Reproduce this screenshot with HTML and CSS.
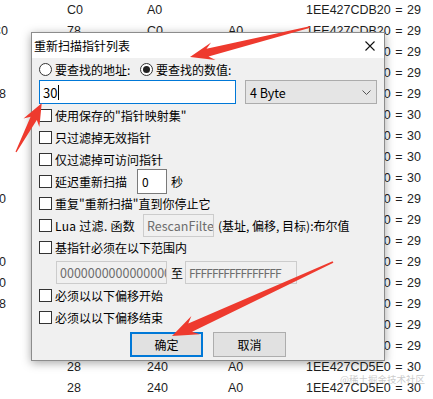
FILE: index.html
```html
<!DOCTYPE html>
<html lang="zh-CN">
<head>
  <meta charset="UTF-8" />
  <title>重新扫描指针列表</title>
  <link rel="stylesheet" href="styles.css">
</head>
<body>

  <!-- Pointer list behind the dialog -->
  <div class="table">
    <div class="row"><span></span><span>C0</span><span>A0</span><span></span><span>1EE427CDB20 = 29</span></div>
    <div class="row"><span>C0</span><span>78</span><span>C0</span><span>A0</span><span>1EE427CDB20 = 29</span></div>
    <div class="row"><span></span><span>C0</span><span>A0</span><span></span><span>1EE427CDB20 = 29</span></div>
    <div class="row"><span></span><span>C0</span><span>A0</span><span></span><span>1EE427CDB20 = 29</span></div>
    <div class="row"><span>18</span><span>78</span><span>C0</span><span>A0</span><span>1EE427CDB20 = 29</span></div>
    <div class="row"><span></span><span>28</span><span>240</span><span>A0</span><span>1EE427CD5E0 = 30</span></div>
    <div class="row"><span></span><span>28</span><span>240</span><span>A0</span><span>1EE427CD5E0 = 30</span></div>
    <div class="row"><span></span><span>28</span><span>240</span><span>A0</span><span>1EE427CD5E0 = 30</span></div>
    <div class="row"><span></span><span>28</span><span>240</span><span>A0</span><span>1EE427CD5E0 = 30</span></div>
    <div class="row"><span>10</span><span>C0</span><span>A0</span><span></span><span>1EE427CDB20 = 29</span></div>
    <div class="row"><span></span><span>C0</span><span>A0</span><span></span><span>1EE427CDB20 = 29</span></div>
    <div class="row"><span></span><span>C0</span><span>A0</span><span></span><span>1EE427CDB20 = 29</span></div>
    <div class="row"><span>10</span><span>78</span><span>C0</span><span>A0</span><span>1EE427CDB20 = 29</span></div>
    <div class="row"><span>10</span><span>78</span><span>C0</span><span>A0</span><span>1EE427CDB20 = 29</span></div>
    <div class="row"><span>18</span><span>78</span><span>C0</span><span>A0</span><span>1EE427CDB20 = 29</span></div>
    <div class="row"><span></span><span>C0</span><span>A0</span><span></span><span>1EE427CDB20 = 29</span></div>
    <div class="row"><span></span><span>C0</span><span>A0</span><span></span><span>1EE427CDB20 = 29</span></div>
    <div class="row"><span></span><span>28</span><span>240</span><span>A0</span><span>1EE427CD5E0 = 30</span></div>
    <div class="row"><span></span><span>28</span><span>240</span><span>A0</span><span>1EE427CD5E0 = 30</span></div>
  </div>

  <div class="watermark">@稀土掘金技术社区</div>

  <!-- Rescan dialog -->
  <div class="dialog">
    <div class="titlebar">
      <span>重新扫描指针列表</span>
      <svg class="close" width="10" height="10" viewBox="0 0 10 10">
        <path d="M0.5 0.5 L9.5 9.5 M9.5 0.5 L0.5 9.5" stroke="#111" stroke-width="1.1" fill="none"/>
      </svg>
    </div>

    <div class="body">
      <div class="radio-row">
        <label class="radio first"><span class="dot"></span>要查找的地址:</label>
        <label class="radio"><span class="dot checked"></span>要查找的数值:</label>
      </div>

      <div class="value-row">
        <div class="edit focused">30<span class="caret"></span></div>
        <div class="select">
          <span>4 Byte</span>
          <svg width="9" height="5" viewBox="0 0 9 5"><polyline points="0.5,0.5 4.5,4.5 8.5,0.5" fill="none" stroke="#555" stroke-width="1"/></svg>
        </div>
      </div>

      <label class="check"><span class="box"></span>使用保存的"指针映射集"</label>
      <label class="check"><span class="box"></span>只过滤掉无效指针</label>
      <label class="check"><span class="box"></span>仅过滤掉可访问指针</label>
      <label class="check"><span class="box"></span>延迟重新扫描<span class="edit delay">0</span><span class="unit">秒</span></label>
      <label class="check"><span class="box"></span>重复"重新扫描"直到你停止它</label>
      <label class="check"><span class="box"></span><span class="lua-label">Lua 过滤. 函数</span><span class="edit disabled lua">RescanFilter</span><span class="hint">(基址, 偏移, 目标):布尔值</span></label>
      <label class="check"><span class="box"></span>基指针必须在以下范围内</label>

      <div class="range-row">
        <span class="edit disabled range">0000000000000000</span>
        <span class="to">至</span>
        <span class="edit disabled range hi">FFFFFFFFFFFFFFFF</span>
      </div>

      <label class="check"><span class="box"></span>必须以以下偏移开始</label>
      <label class="check"><span class="box"></span>必须以以下偏移结束</label>

      <div class="buttons">
        <button class="default">确定</button>
        <button>取消</button>
      </div>
    </div>
  </div>

  <!-- Annotation arrows -->
  <svg class="arrows" width="433" height="399" viewBox="0 0 433 399">
    <polygon points="309.8,26.2 206.5,48.7 211.1,42.5 190,57 215.5,59.9 208.5,56.5 310.2,27.8" />
    <polygon points="16.5,152.3 36.8,119.9 39.4,126.9 41.7,103.3 23.5,118.5 30.6,116.7 15.5,151.7" />
    <polygon points="332.6,261.3 188.3,323.5 191.4,316.0 172,336 199.8,334.2 192.1,331.7 333.4,262.7" />
  </svg>

</body>
</html>
```

FILE: styles.css
```css
* { box-sizing: border-box; margin: 0; padding: 0; }

html, body {
  width: 433px;
  height: 399px;
  overflow: hidden;
  background: #fff;
  font-family: "Noto Sans CJK SC", "Noto Sans", sans-serif;
}

body { position: relative; }

/* TABLE BEHIND */
.table {
  color: #1e1e1e;
  font-family: "Liberation Sans", "Noto Sans CJK SC", sans-serif;
  font-size: 12.5px;
}

.row {
  display: grid;
  grid-template-columns: 75px 80px 81px 78px auto;
  margin-left: -8px;
  height: 21px;
  line-height: 21px;
  white-space: pre;
  word-spacing: 1px;
}

.watermark {
  position: absolute;
  left: 340px;
  top: 372px;
  font-size: 9.5px;
  line-height: 14px;
  color: rgba(150, 150, 150, 0.5);
}

/* DIALOG */
.dialog {
  position: absolute;
  left: 31px;
  top: 32px;
  width: 354px;
  height: 329px;
  border: 1px solid #8c8c8c;
  background: #f0f0f0;
  box-shadow: 0 2px 9px rgba(0, 0, 0, 0.35);
  font-size: 12px;
  color: #000;
  display: flex;
  flex-direction: column;
}

.titlebar {
  height: 25px;
  flex: none;
  background: #fff;
  display: flex;
  align-items: center;
  justify-content: space-between;
  padding: 0 9px 0 2px;
  font-size: 12px;
}

.body {
  padding: 1px 7px 0 7px;
  display: flex;
  flex-direction: column;
}

.radio-row {
  height: 21px;
  display: flex;
  align-items: center;
}

.radio {
  display: flex;
  align-items: center;
  gap: 3px;
}

.radio.first { width: 101px; }

.dot {
  width: 13px;
  height: 13px;
  border: 1px solid #333;
  border-radius: 50%;
  background: #fff;
  display: flex;
  align-items: center;
  justify-content: center;
}

.dot.checked::after {
  content: "";
  width: 7px;
  height: 7px;
  border-radius: 50%;
  background: #222;
}

.value-row {
  height: 24px;
  display: flex;
  gap: 9px;
}

.edit {
  display: flex;
  align-items: center;
  background: #fff;
  border: 1px solid #7a7a7a;
  padding-left: 3px;
  overflow: hidden;
  white-space: nowrap;
}

.edit.focused {
  width: 197px;
  height: 24px;
  border-color: #0078d7;
  font-size: 13px;
}

.caret {
  width: 1px;
  height: 15px;
  background: #000;
  margin-left: 1px;
}

.select {
  width: 132px;
  height: 24px;
  background: #e5e5e5;
  border: 1px solid #acacac;
  display: flex;
  align-items: center;
  justify-content: space-between;
  padding: 0 5px 0 4px;
  font-size: 12.5px;
}

.check {
  height: 22px;
  display: flex;
  align-items: center;
  gap: 3px;
  white-space: nowrap;
}

.box {
  width: 13px;
  height: 13px;
  flex: none;
  border: 1px solid #333;
  background: #fff;
}

.edit.delay {
  width: 30px;
  height: 25px;
  margin-left: 7px;
  padding-left: 4px;
}

.unit { margin-left: 1px; }

.edit.disabled {
  background: #f0f0f0;
  border-color: #cccccc;
  color: #6d6d6d;
  height: 23px;
}

.lua-label {
  width: 79px;
  letter-spacing: 0.3px;
}

.edit.lua {
  width: 71px;
  margin-left: 6px;
  font-size: 12.5px;
}

.hint { margin-left: 1px; }

.range-row {
  height: 26px;
  padding: 2px 0 0 17px;
  display: flex;
  align-items: center;
}

.edit.range {
  width: 111px;
  font-size: 12.5px;
}

.edit.range.hi {
  width: 112px;
  font-size: 12px;
  letter-spacing: -0.9px;
}

.to { margin: 0 2px 0 4px; }

.buttons {
  margin-top: 4px;
  display: flex;
  justify-content: center;
  gap: 10px;
}

.buttons button {
  width: 73px;
  height: 25px;
  background: #e1e1e1;
  border: 1px solid #adadad;
  font-family: inherit;
  font-size: 12px;
  color: #000;
}

.buttons button.default {
  border: 2px solid #0078d7;
}

/* ARROWS */
.arrows {
  position: absolute;
  left: 0;
  top: 0;
  pointer-events: none;
}

.arrows polygon { fill: #ee3a2e; }
```
